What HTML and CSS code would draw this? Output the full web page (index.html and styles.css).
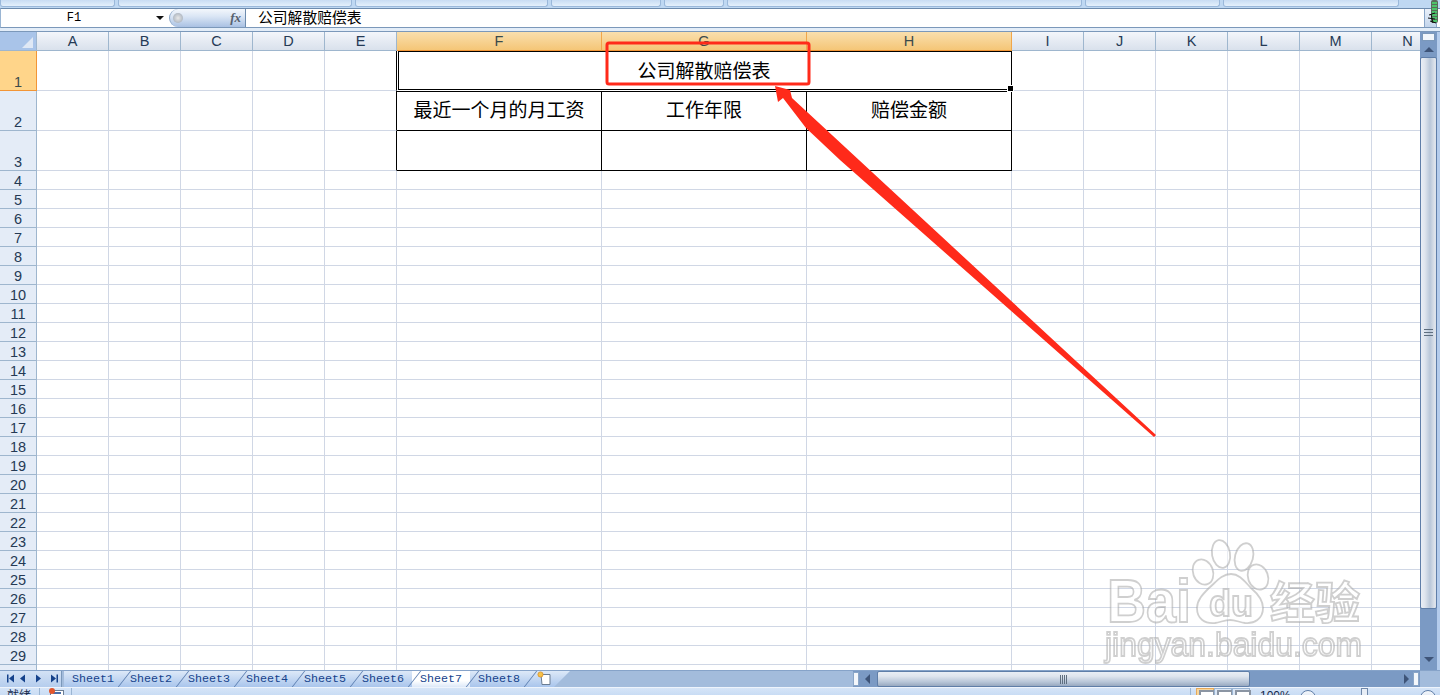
FILE: index.html
```html
<!DOCTYPE html>
<html lang="zh-CN">
<head>
  <meta charset="UTF-8">
  <title>公司解散赔偿表</title>
  <link rel="stylesheet" href="styles.css">
</head>
<body>

  <div class="ribbon-edge">
    <span class="group g1"></span>
    <span class="group g2"></span>
    <span class="group g3"></span>
    <span class="group g4"></span>
    <span class="group g5"></span>
    <span class="group g6"></span>
    <span class="group g7"></span>
    <span class="group g8"></span>
  </div>

  <div class="formula-bar">
    <div class="name-box">
      <span class="name-ref">F1</span>
      <span class="name-arrow"></span>
    </div>
    <div class="fx-button">
      <span class="fx-ball"></span>
      <span class="fx-label">fx</span>
    </div>
    <div class="formula-text">公司解散赔偿表</div>
    <div class="formula-expand"></div>
  </div>
  <div class="formula-gap"></div>

  <div class="sheet-area">
    <div class="grid-wrap">
      <table class="grid">
        <colgroup id="cols"></colgroup>
        <thead><tr id="col-heads"></tr></thead>
        <tbody id="rows"></tbody>
      </table>
    </div>
    <div class="vscroll">
      <div class="v-split"></div>
      <div class="v-btn"><span class="tri-up"></span></div>
      <div class="v-thumb"><span class="v-grip"></span></div>
      <div class="v-trough"></div>
      <div class="v-btn v-btn-down"><span class="tri-down"></span></div>
    </div>
  </div>

  <div class="tab-bar">
    <div class="tab-nav">
      <svg width="62" height="15" viewBox="0 0 62 15">
        <path d="M7 3.5h1.5v8H7zM14 3.5v8l-5-4zM25 3.5v8l-5-4zM36 3.5v8l5-4zM51 3.5v8l5-4zM56.5 3.5H58v8h-1.5z" fill="#15428b"/>
      </svg>
    </div>
    <div class="tabs">
      <span class="tab">Sheet1</span>
      <span class="tab">Sheet2</span>
      <span class="tab">Sheet3</span>
      <span class="tab">Sheet4</span>
      <span class="tab">Sheet5</span>
      <span class="tab">Sheet6</span>
      <span class="tab tab-active">Sheet7</span>
      <span class="tab">Sheet8</span>
      <span class="tab-add">
        <svg width="18" height="15" viewBox="0 0 18 15">
          <path d="M5 3.5h9v10H6z" fill="#fff" stroke="#6b7d93"/>
          <circle cx="4.5" cy="3.5" r="2.6" fill="#f6c24a" stroke="#d98a1e" stroke-width=".7"/>
        </svg>
      </span>
    </div>
    <div class="hscroll">
      <span class="h-split"></span>
      <span class="tri-left"></span>
      <div class="h-thumb"><span class="h-grip"></span></div>
      <span class="tri-right"></span>
      <span class="h-split"></span>
    </div>
  </div>

  <div class="status-bar">
    <span class="status-text">就绪</span>
    <span class="status-macro">
      <svg width="16" height="12" viewBox="0 0 16 12">
        <rect x="2.5" y="2.5" width="13" height="10" fill="#fff" stroke="#6b7d93"/>
        <path d="M5 5h8" stroke="#4a6ea9" stroke-width="2"/>
        <circle cx="4" cy="3" r="3" fill="#e2562d"/>
      </svg>
    </span>
    <div class="status-right">
      <div class="views">
        <span class="view view-on"></span>
        <span class="view"></span>
        <span class="view"></span>
      </div>
      <span class="zoom-text">100%</span>
      <span class="zoom-round"></span>
      <span class="zoom-track"><span class="zoom-notch"></span></span>
      <span class="zoom-round"></span>
    </div>
  </div>

  <svg class="overlay" width="1440" height="695" viewBox="0 0 1440 695">
    <g class="watermark">
      <ellipse cx="1203" cy="572" rx="10" ry="13" transform="rotate(-20 1203 572)"/>
      <ellipse cx="1221" cy="554" rx="9" ry="14" transform="rotate(-10 1221 554)"/>
      <ellipse cx="1244" cy="557" rx="9" ry="14" transform="rotate(15 1244 557)"/>
      <ellipse cx="1258" cy="577" rx="10" ry="13" transform="rotate(-20 1258 577)"/>
      <path d="M1231 574c9 0 14 8 20 14 7 6 12 12 12 20 0 11-9 16-18 15-6-1-10-3-15-3s-9 2-15 3c-10 1-18-4-18-15 0-8 6-14 12-20 7-6 13-14 22-14z"/>
      <text class="wm-bold" x="1107" y="622" textLength="84" lengthAdjust="spacingAndGlyphs">Bai</text>
      <text class="wm-du" x="1209" y="616" textLength="44" lengthAdjust="spacingAndGlyphs">du</text>
      <text class="wm-cjk" x="1270" y="619" textLength="90" lengthAdjust="spacingAndGlyphs">经验</text>
      <text class="wm-url" x="1105" y="656" textLength="257" lengthAdjust="spacingAndGlyphs">jingyan.baidu.com</text>
    </g>
    <rect class="mark-box" x="607" y="43" width="202" height="41" rx="2"/>
    <polygon class="mark-arrow" points="775,86 790,90 792,98 1156,435 1154,437 840,160 806,128 783,98 778,102"/>
    <g class="cursor-mark">
      <rect x="1431" y="0" width="7" height="23" rx="2"/>
      <path d="M1432 3h5M1432 6h5M1432 9h5M1432 12h5M1432 15h5M1432 18h5M1432 21h5"/>
    </g>
    <path class="cursor-ink" d="M1429 15l6-2M1428 18l7 1M1430 21l6 2M1431 14l2 9"/>
  </svg>

  <script src="script.js"></script>
</body>
</html>
```

FILE: styles.css
```css
* { box-sizing: border-box; }

body {
  margin: 0;
  width: 1440px;
  height: 695px;
  overflow: hidden;
  position: relative;
  background: #c5d9f1;
  font-family: "Liberation Sans", "Noto Sans CJK SC", sans-serif;
  color: #000;
}

/* bottom edge of the ribbon */
.ribbon-edge {
  display: flex;
  gap: 3px;
  height: 8px;
  background: #bfd8f2;
}

.group {
  display: block;
  height: 7px;
  background: linear-gradient(#c8dcf3, #e4f0fc);
  border: 1px solid #9ab8da;
  border-top: none;
  border-radius: 0 0 3px 3px;
}

.g1 { width: 115px; }
.g2 { width: 234px; }
.g3 { width: 193px; }
.g4 { width: 110px; }
.g5 { width: 60px; }
.g6 { width: 355px; }
.g7 { width: 135px; }
.g8 { width: 176px; }

.formula-bar {
  display: flex;
  height: 20px;
  background: #fff;
  border-top: 1px solid #6d8bad;
  border-bottom: 1px solid #7b98ba;
  border-left: 1px solid #9ab5d3;
}

.name-box {
  display: flex;
  align-items: center;
  width: 168px;
}

.name-ref {
  flex: 1;
  text-align: center;
  font-family: "Liberation Mono", monospace;
  font-size: 12px;
  padding-right: 9px;
}

.name-arrow {
  width: 0;
  height: 0;
  margin-right: 5px;
  border-left: 4px solid transparent;
  border-right: 4px solid transparent;
  border-top: 4px solid #111;
}

.fx-button {
  display: flex;
  align-items: center;
  justify-content: space-between;
  width: 77px;
  padding: 0 4px 0 3px;
  background: linear-gradient(#f3f7fc, #dbe6f5 40%, #a9c1e3);
  border: 1px solid #8aa6c8;
  border-right-color: #6d8bad;
  border-width: 0 1px 0 1px;
  border-radius: 10px 0 0 10px;
}

.fx-ball {
  width: 10px;
  height: 10px;
  border-radius: 50%;
  background: radial-gradient(#e8e8e8, #9aa5b3);
}

.fx-label {
  font-family: "Liberation Serif", serif;
  font-style: italic;
  font-weight: bold;
  font-size: 13px;
  color: #56606e;
}

.formula-text {
  flex: 1;
  padding-left: 12px;
  font-size: 14.8px;
  line-height: 18px;
  white-space: nowrap;
}

.formula-expand {
  width: 13px;
  margin-right: 3px;
  background: linear-gradient(#eaf1fa, #c3d5ec);
  border-left: 1px solid #8aa6c8;
  border-right: 1px solid #8aa6c8;
}

.formula-gap {
  height: 4px;
  background: #e3edf8;
  border-bottom: 1px solid #7b98ba;
}

.sheet-area {
  display: flex;
  height: 638px;
}

.grid-wrap {
  width: 1420px;
  overflow: hidden;
  background: #fff;
}

.grid {
  table-layout: fixed;
  width: 1444px;
  border-collapse: separate;
  border-spacing: 0;
}

.grid td,
.grid th {
  padding: 0;
  border-right: 1px solid #d0d7e5;
  border-bottom: 1px solid #d0d7e5;
  font-weight: normal;
}

.grid tr { height: 19px; }
.grid tr.tall { height: 40px; }

.grid th {
  height: 19px;
  color: #253a55;
  font-size: 14.5px;
  line-height: 17px;
  border-color: #9eb6ce;
  background: linear-gradient(#f3f6fb, #e6ebf3 50%, #d9e1ec);
}

.grid th.corner {
  position: relative;
  background: #a9c4e9;
}

.corner::after {
  content: "";
  position: absolute;
  right: 3px;
  bottom: 2px;
  border-left: 11px solid transparent;
  border-bottom: 11px solid #dfe8f5;
}

.grid th.on {
  background: linear-gradient(#f9dfae, #f5c677);
  border-right-color: #f0a64a;
  border-bottom-color: #f29536;
  color: #3b4a4a;
}

.grid th.row-head {
  vertical-align: bottom;
  line-height: 15px;
  background: #e4ecf7;
}

.grid th.row-head.on {
  background: #ffd58a;
  border-right-color: #f29536;
}

.grid td.edge-right { border-right-color: #000; }

/* the bordered form, F1:H3 */
.form-cell {
  text-align: center;
  font-size: 19px;
  line-height: 24px;
  font-family: "Noto Sans CJK SC", sans-serif;
  padding-bottom: 3px;
}

.grid td.form-cell {
  padding-bottom: 3px;
  border-right-color: #000;
  border-bottom-color: #000;
}

.grid td.top-line { box-shadow: inset 0 1px 0 #000; }

.grid td.form-title {
  position: relative;
  padding-bottom: 1px;
  border-bottom-color: #fff;
}

.form-title::after {
  content: "";
  position: absolute;
  left: 1px;
  right: -1px;
  top: 0;
  bottom: 0;
  border: 1px solid #000;
}

.form-title::before {
  content: "";
  position: absolute;
  right: -3px;
  bottom: -2px;
  width: 5px;
  height: 5px;
  background: #000;
  border: 1px solid #fff;
  z-index: 1;
}

.vscroll {
  display: flex;
  flex-direction: column;
  width: 20px;
  background: #7b9ac4;
  border-right: 3px solid #b4ccec;
}

.v-split {
  height: 8px;
  margin: 1px 2px 0;
  background: #f2f6fb;
  border: 1px solid #7b98ba;
}

.v-btn {
  display: flex;
  align-items: center;
  justify-content: center;
  height: 16px;
}

.v-btn-down { margin-bottom: 3px; }

.tri-up {
  border-left: 5px solid transparent;
  border-right: 5px solid transparent;
  border-bottom: 5px solid #3e5478;
}

.tri-down {
  border-left: 5px solid transparent;
  border-right: 5px solid transparent;
  border-top: 5px solid #3e5478;
}

.v-thumb {
  display: flex;
  align-items: center;
  justify-content: center;
  height: 552px;
  background: linear-gradient(90deg, #e9eef5, #dfe5ee 25%, #b9c7d9 60%, #dce2ea 90%);
  border: 1px solid #5f7ea8;
  border-radius: 2px;
}

.v-grip {
  width: 9px;
  height: 8px;
  background: repeating-linear-gradient(#5f6f80 0 1px, transparent 1px 3px);
}

.v-trough { flex: 1; }

.tab-bar {
  display: flex;
  height: 17px;
  background: #a3bcdc;
  border-top: 1px solid #86a3c9;
}

.tab-nav {
  width: 62px;
  height: 16px;
  background: linear-gradient(#d3e2f5, #b5cded);
  border-right: 1px solid #7b98ba;
}

.tab-nav svg { display: block; }

.tabs {
  display: flex;
  width: 789px;
  margin-left: 2px;
}

.tab {
  position: relative;
  width: 58px;
  height: 16px;
  text-align: center;
  font-family: "Liberation Mono", monospace;
  font-size: 11.67px;
  line-height: 16px;
  color: #15428b;
  background: linear-gradient(#dde9f8, #a9c5ec);
}

.tab::after {
  content: "";
  position: absolute;
  right: -3px;
  top: 0;
  width: 1px;
  height: 16px;
  background: #5d7fb0;
  transform: skewX(-38deg);
  z-index: 1;
}

.tab-active {
  background: linear-gradient(#fff, #fff 60%, #dce8f8);
  color: #15428b;
}

.tab-add {
  display: block;
  width: 42px;
  height: 16px;
  padding-left: 8px;
  background: linear-gradient(#dde9f8, #a9c5ec);
  clip-path: polygon(0 0, 100% 0, 26px 100%, 0 100%);
}

.tab-add svg { display: block; }

.hscroll {
  display: flex;
  align-items: center;
  width: 567px;
  height: 16px;
  background: #7b9ac4;
}

.h-split {
  width: 6px;
  height: 14px;
  background: #f4f7fb;
  border: 1px solid #8aa6c8;
}

.h-split:last-child { margin-right: 1px; }

.tri-left {
  margin: 0 7px 0 6px;
  border-top: 5px solid transparent;
  border-bottom: 5px solid transparent;
  border-right: 5px solid #3e5478;
}

.tri-right {
  margin: 0 4px 0 auto;
  border-top: 5px solid transparent;
  border-bottom: 5px solid transparent;
  border-left: 5px solid #3e5478;
}

.h-thumb {
  display: flex;
  align-items: center;
  justify-content: center;
  width: 373px;
  height: 16px;
  background: linear-gradient(#e9eef5, #dfe5ee 30%, #b9c7d9 70%, #98a9c0);
  border: 1px solid #5f7ea8;
  border-radius: 2px;
}

.h-grip {
  width: 8px;
  height: 9px;
  background: repeating-linear-gradient(90deg, #5f6f80 0 1px, transparent 1px 2px);
}

.status-bar {
  display: flex;
  height: 12px;
  padding-left: 7px;
  overflow: hidden;
  background: linear-gradient(#d6e5f8, #c1d7f2);
  border-top: 1px solid #eef4fc;
}

.status-text {
  width: 33px;
  font-size: 12px;
  line-height: 17px;
  color: #15284b;
  border-right: 1px solid #9ab5d3;
}

.status-macro {
  display: block;
  width: 32px;
  padding-left: 8px;
  border-right: 1px solid #9ab5d3;
}

.status-macro svg { display: block; }

.status-right {
  display: flex;
  width: 250px;
  margin-left: auto;
  padding-left: 5px;
  padding-right: 4px;
  border-left: 1px solid #9ab5d3;
}

.views {
  display: flex;
  height: 12px;
  margin-right: 10px;
}

.view {
  position: relative;
  width: 18px;
  height: 12px;
  background: #dbe7f6;
  border: 1px solid #9ab5d3;
  border-bottom: none;
}

.view::after {
  content: "";
  position: absolute;
  left: 2px;
  top: 1px;
  width: 12px;
  height: 8px;
  background: #fff;
  border: 2px solid #8b95a3;
  border-bottom: none;
}

.view-on {
  background: #f9d69a;
  border-color: #e6a95a;
}

.zoom-text {
  width: 40px;
  font-size: 12px;
  line-height: 17px;
  color: #15284b;
}

.zoom-round {
  flex: none;
  width: 16px;
  height: 16px;
  margin-top: 2px;
  border-radius: 50%;
  border: 1px solid #5f7ea8;
  background: linear-gradient(#f5f8fc, #c2d2e6);
}

.zoom-track {
  display: flex;
  justify-content: center;
  width: 104px;
  padding-right: 7px;
}

.zoom-notch {
  width: 7px;
  height: 12px;
  background: #e8eef6;
  border: 1px solid #6f88aa;
}

/* annotations and watermark painted on top of the sheet */
.overlay {
  position: absolute;
  left: 0;
  top: 0;
  pointer-events: none;
}

.mark-box {
  fill: none;
  stroke: #ff2a1a;
  stroke-width: 3;
}

.mark-arrow { fill: #ff2a1a; }

.cursor-mark rect { fill: #5a6b5a; }

.cursor-mark path {
  fill: none;
  stroke: #4cc36a;
  stroke-width: 2;
}

.cursor-ink {
  fill: none;
  stroke: #111;
  stroke-width: 1;
}

.watermark {
  fill: rgba(255, 255, 255, 0.55);
  stroke: rgba(160, 160, 160, 0.5);
  stroke-width: 1.8;
  filter: blur(0.5px);
}

.wm-bold {
  font-family: "Liberation Sans", sans-serif;
  font-weight: bold;
  font-size: 61px;
}

.wm-du {
  font-family: "Liberation Sans", sans-serif;
  font-weight: bold;
  font-size: 36px;
}

.wm-cjk {
  font-family: "Noto Sans CJK SC", sans-serif;
  font-weight: bold;
  font-size: 44px;
}

.wm-url {
  font-family: "Liberation Sans", sans-serif;
  font-size: 34px;
}
```

FILE: script.js
```js
const columns = 'ABCDEFGHIJKLMN'.split('');
const selected = ['F', 'G', 'H'];
const rowCount = 32;

function buildHead() {
  const cols = document.getElementById('cols');
  const head = document.getElementById('col-heads');

  const first = document.createElement('col');
  first.span = 1;
  first.width = 37;
  cols.appendChild(first);

  const corner = document.createElement('th');
  corner.className = 'corner';
  head.appendChild(corner);

  columns.forEach(name => {
    const col = document.createElement('col');
    col.width = selected.includes(name) ? 205 : 72;
    cols.appendChild(col);

    const th = document.createElement('th');
    th.textContent = name;
    if (selected.includes(name)) th.className = 'on';
    head.appendChild(th);
  });
}

function formCell(text, className) {
  const td = document.createElement('td');
  td.className = className;
  td.textContent = text;
  return td;
}

function buildRows() {
  const body = document.getElementById('rows');
  const form = {
    2: ['最近一个月的月工资', '工作年限', '赔偿金额'],
    3: ['', '', '']
  };

  for (let i = 1; i <= rowCount; i++) {
    const tr = document.createElement('tr');
    if (i <= 3) tr.className = 'tall';

    const th = document.createElement('th');
    th.textContent = i;
    th.className = i === 1 ? 'row-head on' : 'row-head';
    tr.appendChild(th);

    columns.forEach(name => {
      if (i === 1 && name === 'F') {
        const title = formCell('公司解散赔偿表', 'form-cell form-title');
        title.colSpan = 3;
        tr.appendChild(title);
      } else if (i === 1 && selected.includes(name)) {
        // covered by the merged title
      } else if (form[i] && selected.includes(name)) {
        const extra = i === 2 ? ' top-line' : '';
        tr.appendChild(formCell(form[i][selected.indexOf(name)], 'form-cell' + extra));
      } else {
        const td = document.createElement('td');
        if (i <= 3 && name === 'E') td.className = 'edge-right';
        tr.appendChild(td);
      }
    });
    body.appendChild(tr);
  }
}

buildHead();
buildRows();
```
